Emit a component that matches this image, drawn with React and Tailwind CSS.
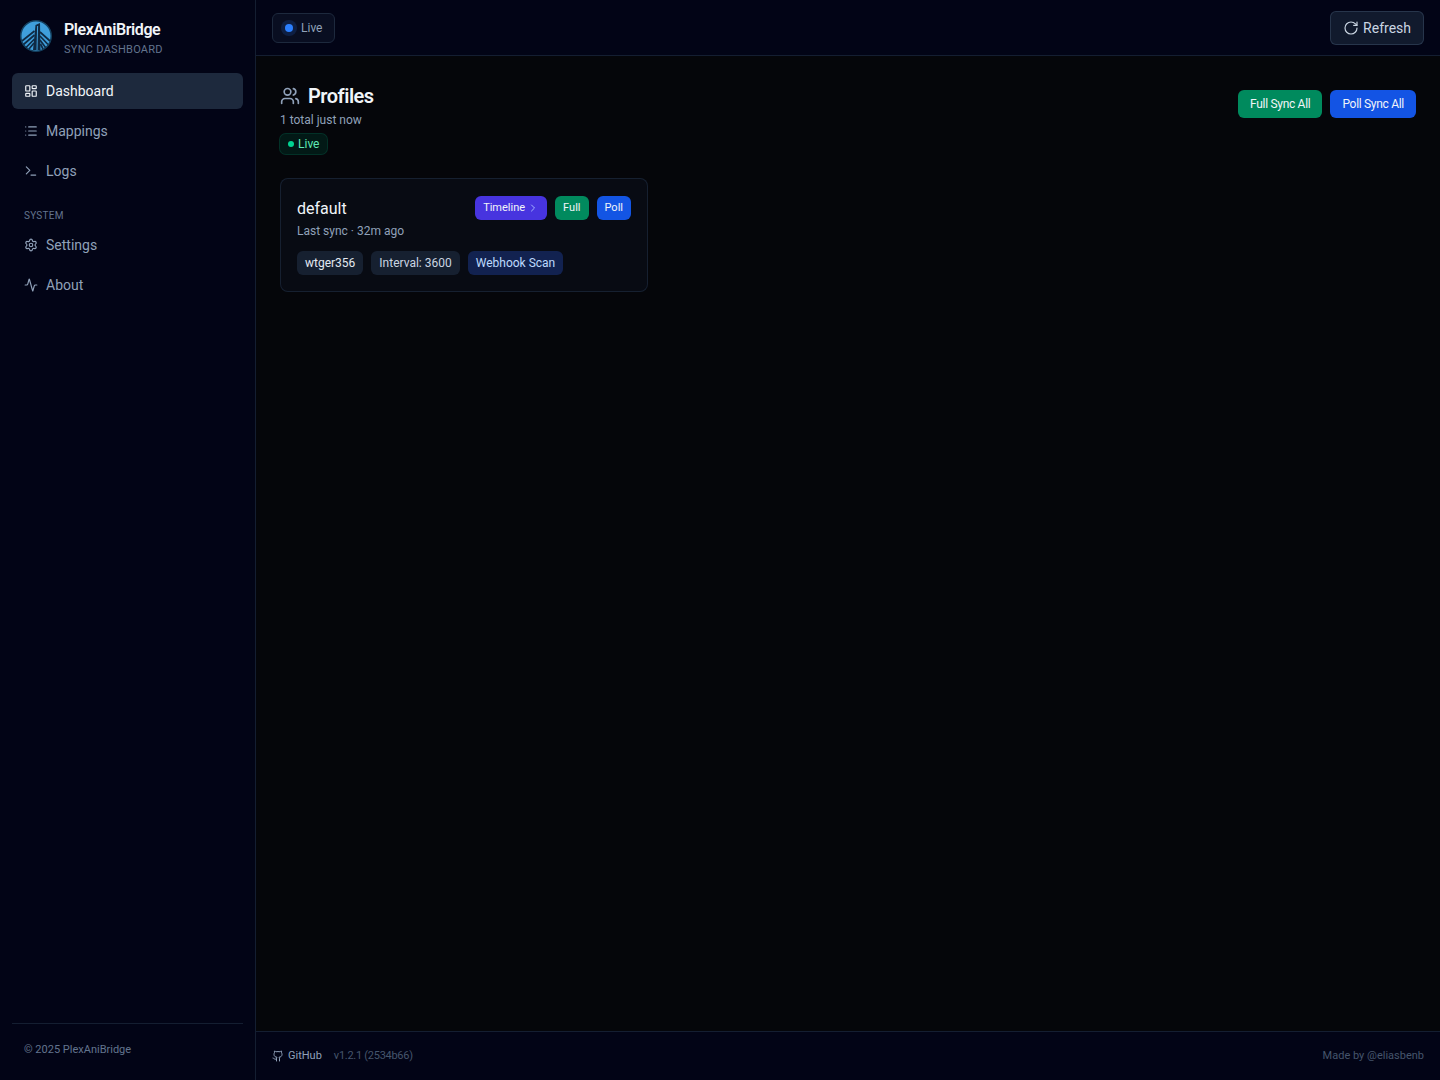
import React from "react";
import { LayoutDashboard, List, Terminal, Settings, Activity, Users, RotateCw, ChevronRight, Github } from "lucide-react";

const Logo = () => (
  <svg viewBox="0 0 32 32" className="h-8 w-8 shrink-0">
    <circle cx="16" cy="16" r="15.25" fill="#3f9fdc" stroke="#14405f" strokeWidth="1.5" />
    <path d="M15.5 5 L20 3 L20.5 30 L13 30 Z" fill="#0f2a44" />
    <path d="M17.6 6 L17 30" stroke="#3f9fdc" strokeWidth="1" />
    <path d="M14.5 11 L2 21 M14.5 15 L3.5 24.5 M14.5 19 L6 27.5 M14 23 L9 29" stroke="#0f2a44" strokeWidth="1.7" fill="none" />
    <path d="M20 12 L30 21 M20 16 L28 24.5 M20 20 L25.5 27.5 M20.5 24 L23 29" stroke="#0f2a44" strokeWidth="1.7" fill="none" />
  </svg>
);

const NavItem = ({ icon: Icon, label, active }) => (
  <a
    href="#"
    className={`flex h-9 items-center gap-2 rounded-md px-3 text-sm ${
      active ? "bg-slate-800 text-slate-100" : "text-slate-400"
    }`}
  >
    <Icon className="h-3.5 w-3.5" />
    <span>{label}</span>
  </a>
);

const Sidebar = () => (
  <aside className="flex w-64 shrink-0 flex-col border-r border-slate-800/70 bg-[#020416]">
    <div className="flex h-[73px] items-start gap-3 px-5 pt-5">
      <Logo />
      <div className="flex flex-col gap-0.5">
        <span className="text-base leading-5 font-semibold tracking-tight text-slate-100">PlexAniBridge</span>
        <span className="text-[11px] leading-4 tracking-wide text-slate-500">SYNC DASHBOARD</span>
      </div>
    </div>

    <nav className="flex flex-1 flex-col gap-1 px-3">
      <NavItem icon={LayoutDashboard} label="Dashboard" active />
      <NavItem icon={List} label="Mappings" />
      <NavItem icon={Terminal} label="Logs" />
      <div className="mt-4 px-3 text-[10px] leading-3.5 tracking-wide text-slate-500">SYSTEM</div>
      <NavItem icon={Settings} label="Settings" />
      <NavItem icon={Activity} label="About" />
    </nav>

    <div className="px-3">
      <div className="border-t border-slate-800/70 px-3 pt-4 pb-5 text-[11px] leading-5 text-slate-500">
        © 2025 PlexAniBridge
      </div>
    </div>
  </aside>
);

const Header = () => (
  <header className="flex h-14 shrink-0 items-center justify-between border-b border-slate-800/70 bg-[#020416] px-4">
    <div className="flex h-[30px] items-center gap-2 rounded-md border border-slate-800 bg-slate-900/50 px-3 text-xs text-slate-400">
      <span className="h-2 w-2 rounded-full bg-blue-500 ring-4 ring-blue-500/15" />
      Live
    </div>
    <button className="flex h-[34px] items-center gap-1 rounded-md border border-slate-700/70 bg-slate-800/60 px-3 text-sm text-slate-300">
      <RotateCw className="h-4 w-4" strokeWidth={1.75} />
      Refresh
    </button>
  </header>
);

const ProfileCard = () => (
  <div className="rounded-lg border border-slate-800/70 bg-slate-900/30 p-4">
    <div className="flex items-center justify-between">
      <div className="pt-0.5 text-base text-slate-100">default</div>
      <div className="flex items-center gap-2">
        <button className="flex items-center gap-0.5 rounded-md bg-indigo-600/90 px-2 py-1 text-[11px] leading-4 text-slate-100">
          Timeline
          <ChevronRight className="h-3 w-3 text-indigo-300" />
        </button>
        <button className="rounded-md bg-emerald-600/90 px-2 py-1 text-[11px] leading-4 text-slate-100">Full</button>
        <button className="rounded-md bg-blue-600/90 px-2 py-1 text-[11px] leading-4 text-slate-100">Poll</button>
      </div>
    </div>
    <p className="mt-0.5 text-xs leading-4 text-slate-400">Last sync · 32m ago</p>
    <div className="mt-3 flex items-center gap-2 text-xs">
      <span className="rounded-md bg-slate-800/70 px-2 py-1 text-slate-200">wtger356</span>
      <span className="rounded-md bg-slate-800/70 px-2 py-1 text-slate-300">Interval: 3600</span>
      <span className="rounded-md bg-blue-900/50 px-2 py-1 text-blue-200">Webhook Scan</span>
    </div>
  </div>
);

const Footer = () => (
  <footer className="flex h-[49px] shrink-0 items-center justify-between border-t border-slate-800/70 bg-[#020416] px-4 text-[11px] text-slate-600">
    <div className="flex items-center gap-3">
      <a href="#" className="flex items-center gap-1 text-slate-400">
        <Github className="h-3 w-3" />
        GitHub
      </a>
      <span className="tracking-tight">v1.2.1 (2534b66)</span>
    </div>
    <span>Made by @eliasbenb</span>
  </footer>
);

export default function App() {
  return (
    <div className="flex h-screen bg-[#05060a]" style={{ fontFamily: "Roboto, sans-serif" }}>
      <Sidebar />
      <div className="flex flex-1 flex-col">
        <Header />
        <main className="flex-1 p-6">
          <div className="flex items-start justify-between">
            <div>
              <div className="flex items-center gap-2">
                <Users className="h-5 w-5 text-slate-400" />
                <h1 className="text-xl leading-8 font-semibold tracking-tight text-slate-100">Profiles</h1>
              </div>
              <p className="text-xs leading-4 text-slate-400">1 total just now</p>
              <div className="mt-1.5 flex w-fit items-center gap-1 rounded-md bg-emerald-950/50 px-2 py-0.5 text-xs leading-4 text-emerald-300 ring-1 ring-emerald-900/60">
                <span className="h-1.5 w-1.5 rounded-full bg-emerald-400" />
                Live
              </div>
            </div>
            <div className="mt-2.5 flex items-center gap-2">
              <button className="h-7 rounded-md bg-emerald-600/90 px-3 text-xs tracking-tight text-slate-100">Full Sync All</button>
              <button className="h-7 rounded-md bg-blue-600/90 px-3 text-xs tracking-tight text-slate-100">Poll Sync All</button>
            </div>
          </div>
          <div className="mt-6 grid grid-cols-3 gap-4">
            <ProfileCard />
          </div>
        </main>
        <Footer />
      </div>
    </div>
  );
}
